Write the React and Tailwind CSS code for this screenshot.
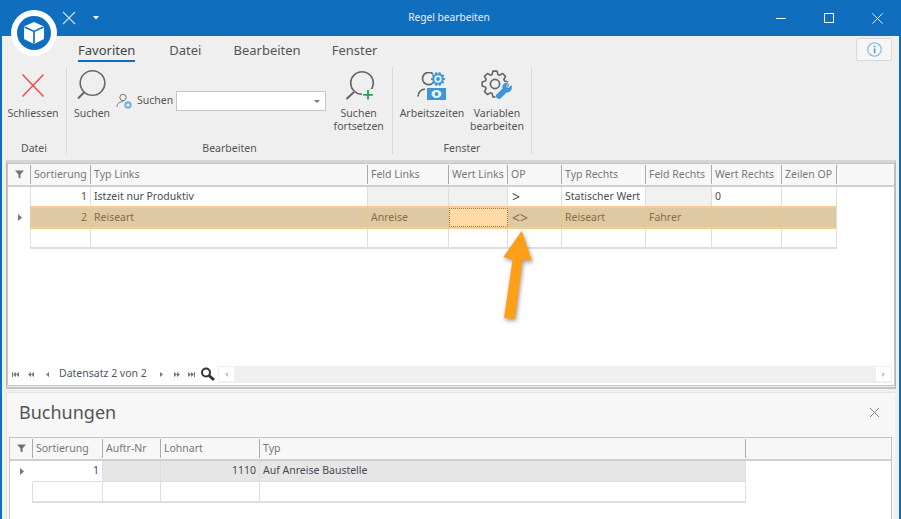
const FONT = "font-['Open_Sans','Noto_Sans',sans-serif]";

function Logo() {
  return (
    <div className="absolute left-[11px] top-[10px] w-[46px] h-[46px] rounded-full bg-white flex items-center justify-center">
      <svg width="34" height="34" viewBox="0 0 34 34">
        <circle cx="17" cy="17" r="17" fill="#106ebe" />
        <path d="M17 6 L27 10.5 V23 L17 28 L7 23 V10.5 Z" fill="#fff" />
        <path d="M7.5 11 L17 15.4 L26.5 11 M17 15.4 V27.5" fill="none" stroke="#106ebe" strokeWidth="1.7" />
      </svg>
    </div>
  );
}

function TitleBar() {
  return (
    <div className="h-[36px] grid grid-cols-[1fr_auto_1fr] items-center text-white shrink-0">
      <div className="flex items-center pl-[62px] gap-[17px]">
        <svg width="14" height="14" viewBox="0 0 14 14" stroke="#cfe3f5" strokeWidth="1.1" fill="none"><path d="M1 1 L13 13 M13 1 L1 13" /></svg>
        <svg width="6" height="4" viewBox="0 0 6 4" fill="#fff"><path d="M0 0 H6 L3 3.5 Z" /></svg>
      </div>
      <div className="text-[10.2px] text-[#e6f0f9] pr-[3px]">Regel bearbeiten</div>
      <div className="flex justify-end items-center pr-[18px] gap-[38px]">
        <svg width="10" height="10" viewBox="0 0 10 10" stroke="#fff" strokeWidth="1" fill="none"><path d="M0 5.5 H10" /></svg>
        <svg width="10" height="10" viewBox="0 0 10 10" stroke="#fff" strokeWidth="1" fill="none"><rect x=".5" y=".5" width="9" height="9" /></svg>
        <svg width="11" height="11" viewBox="0 0 11 11" stroke="#fff" strokeWidth="1" fill="none"><path d="M.5 .5 L10.5 10.5 M10.5 .5 L.5 10.5" /></svg>
      </div>
    </div>
  );
}

function Tabs() {
  return (
    <div className="h-[31px] flex items-start pl-[76px] pr-[7px] gap-[32px] text-[13px] text-[#555] shrink-0">
      <div className="relative pt-[3px] text-[#444] leading-[22px]">
        Favoriten
        <div className="h-[2px] bg-[#106ebe] -mt-[1px]" />
      </div>
      <div className="pt-[3px] ml-[2px] leading-[22px]">Datei</div>
      <div className="pt-[3px] leading-[22px]">Bearbeiten</div>
      <div className="pt-[3px] -ml-[1px] leading-[22px]">Fenster</div>
      <div className="ml-auto mt-[2px] w-[36px] h-[23px] bg-[#f6f6f6] border border-[#d8d8d8] rounded-[2px] flex items-center justify-center">
        <svg width="15" height="15" viewBox="0 0 15 15" fill="none"><circle cx="7.5" cy="7.5" r="6.7" stroke="#7fb8e6" strokeWidth="1.1" /><rect x="6.8" y="6.5" width="1.6" height="4.8" fill="#4a9ad8" /><rect x="6.8" y="3.7" width="1.6" height="1.6" fill="#4a9ad8" /></svg>
      </div>
    </div>
  );
}

function Magnifier() {
  return (
    <svg width="32" height="33" viewBox="0 0 32 33" fill="none" stroke="#666" strokeWidth="1.6">
      <circle cx="16.5" cy="16" r="12.3" />
      <path d="M8.5 25 L2 31.5" strokeWidth="2" />
    </svg>
  );
}

function MagnifierPlus() {
  return (
    <svg width="32" height="33" viewBox="0 0 32 33" fill="none" stroke="#666" strokeWidth="1.6">
      <circle cx="19" cy="16" r="11.3" />
      <path d="M11 25 L3.5 32" strokeWidth="2" />
      <rect x="19" y="22" width="13" height="11" fill="#efefef" stroke="none" />
      <path d="M25 23 V32.5 M20.2 27.8 H29.8" stroke="#27a34b" strokeWidth="1.8" />
    </svg>
  );
}

function BigButton({ icon, lines, w }) {
  return (
    <div className={`flex flex-col items-center ${w}`}>
      <div className="h-[33px] flex items-end justify-center">{icon}</div>
      <div className="mt-[7px] leading-[13px] text-center whitespace-nowrap">
        {lines.map((l) => <div key={l}>{l}</div>)}
      </div>
    </div>
  );
}

function Sep() {
  return <div className="w-px bg-[#d9d9d9] shrink-0" />;
}

function PersonClock() {
  return (
    <svg width="16" height="17" viewBox="0 0 16 17" fill="none">
      <circle cx="7" cy="4.5" r="3.2" stroke="#777" strokeWidth="1" />
      <path d="M1 14 C1 10 4 8.7 7 8.7" stroke="#777" strokeWidth="1" />
      <circle cx="12" cy="12" r="3.7" fill="#6fb2e4" />
      <circle cx="12" cy="12" r="1.6" fill="#efefef" />
    </svg>
  );
}

function gearPath(cx, cy, ro, ri, teeth) {
  const pts = [];
  const step = (Math.PI * 2) / teeth;
  for (let i = 0; i < teeth; i++) {
    const a = i * step;
    const list = [[ri, a - step * 0.38], [ro, a - step * 0.2], [ro, a + step * 0.2], [ri, a + step * 0.38]];
    list.forEach(([r, t]) => pts.push(`${(cx + r * Math.cos(t)).toFixed(2)} ${(cy + r * Math.sin(t)).toFixed(2)}`));
  }
  return `M${pts.join(" L")} Z`;
}

function Arbeitszeiten() {
  return (
    <svg width="30" height="28" viewBox="0 0 30 28" fill="none">
      <path d="M16 2 A6.2 6.2 0 1 0 16 11" stroke="#666" strokeWidth="1.7" />
      <path d="M1 24.5 C1.5 20 4 17.5 8 17" stroke="#666" strokeWidth="1.7" />
      <path d={gearPath(21, 7, 7, 5.6, 10)} fill="#3b97d9" />
      <circle cx="21" cy="7" r="3.7" fill="#efefef" />
      <circle cx="21" cy="7" r="1.9" fill="#3b97d9" />
      <rect x="10" y="16" width="19" height="12" fill="#3b97d9" />
      <ellipse cx="19.5" cy="22" rx="5" ry="4" fill="#efefef" />
      <circle cx="19.5" cy="22" r="1.9" fill="#3b97d9" />
    </svg>
  );
}

function Variablen() {
  return (
    <svg width="32" height="32" viewBox="0 0 32 32" fill="none">
      <path d={gearPath(14, 16, 13, 10, 8)} stroke="#666" strokeWidth="1.6" strokeLinejoin="round" />
      <circle cx="14" cy="16" r="4.6" stroke="#666" strokeWidth="1.7" />
      <path d="M30.5 17 L27.5 20 L25 18.5 L27.5 14.5 C24 14 20.5 16.5 21.5 20.5 L15 27 C14 29 17.5 32 19.5 30.5 L25.5 24.5 C29.5 25 32 21 30.5 17 Z" fill="#3b97d9" stroke="#efefef" strokeWidth="1.4" paintOrder="stroke" />
    </svg>
  );
}

function Group({ label, w, children }) {
  return (
    <div className={`flex flex-col items-stretch shrink-0 ${w}`}>
      <div className="flex-1 flex items-start">{children}</div>
      <div className="h-[12px] leading-[12px] text-center">{label}</div>
    </div>
  );
}

function Ribbon() {
  return (
    <div className="h-[87px] flex items-stretch text-[10.5px] text-[#555] shrink-0 pr-[2px]">
      <Group label="Datei" w="w-[64px]">
        <BigButton w="w-[62px]" lines={["Schliessen"]} icon={
          <svg width="22" height="23" viewBox="0 0 22 23" stroke="#ee4b4b" strokeWidth="1.5" fill="none" className="mb-[3px]"><path d="M.5 .5 L21.5 22.5 M21.5 .5 L.5 22.5" /></svg>
        } />
      </Group>
      <Sep />
      <Group label="Bearbeiten" w="w-[325px]">
        <div className="flex items-start">
          <BigButton w="w-[50px]" lines={["Suchen"]} icon={<Magnifier />} />
          <div className="flex items-center mt-[24px] ml-[-1px]">
            <PersonClock />
            <span className="ml-[5px]">Suchen</span>
            <div className="ml-[3px] w-[150px] h-[20px] bg-white border border-[#c6c6c6] flex items-center justify-end pr-[5px]">
              <svg width="6" height="3" viewBox="0 0 6 3" fill="#777"><path d="M0 0 H6 L3 3 Z" /></svg>
            </div>
          </div>
          <BigButton w="w-[65px]" lines={["Suchen", "fortsetzen"]} icon={<MagnifierPlus />} />
        </div>
      </Group>
      <Sep />
      <Group label="Fenster" w="w-[138px]">
        <div className="flex pl-[5px]">
          <BigButton w="w-[68px]" lines={["Arbeitszeiten"]} icon={<Arbeitszeiten />} />
          <BigButton w="w-[62px]" lines={["Variablen", "bearbeiten"]} icon={<Variablen />} />
        </div>
      </Group>
      <Sep />
    </div>
  );
}

const TOP = "grid grid-cols-[23px_60px_277px_81px_59px_54px_84px_66px_70px_55px_1fr]";
const BOT = "grid grid-cols-[23px_70px_58px_99px_486px_1fr]";

function FilterIcon() {
  return <svg width="9" height="9" viewBox="0 0 9 9" fill="#707070"><path d="M0 .5 H9 L5.5 4.5 V8.5 L3.5 7.5 V4.5 Z" /></svg>;
}
function Tri() {
  return <svg width="4" height="7" viewBox="0 0 4 7" fill="#777"><path d="M0 0 L4 3.5 L0 7 Z" /></svg>;
}

function Header({ labels, tpl }) {
  return (
    <div className={`${tpl} h-[23px] bg-[#f7f7f7] border-b-2 border-[#cfcfcf] text-[10.5px] text-[#777] shrink-0`}>
      <div className="flex items-center justify-center border-r border-[#aaa] my-[1px]"><FilterIcon /></div>
      {labels.map((l, i) => (
        <div key={i} className={`flex items-center pl-[3px] my-[1px] overflow-hidden whitespace-nowrap ${i < labels.length - 1 ? "border-r border-[#aaa]" : ""}`}>{l}</div>
      ))}
    </div>
  );
}

function Cell({ children, right, bg = "", border = "border-[#dedede]", extra = "" }) {
  return (
    <div className={`flex items-center px-[3px] border-r overflow-hidden whitespace-nowrap ${border} ${right ? "justify-end" : ""} ${bg} ${extra}`}>{children}</div>
  );
}

function TopGrid() {
  const sel = "border-[#e9c58e]";
  const sb = "bg-[#dfc9a3] border-y-2 border-y-[#f5cd93]";
  return (
    <div className="h-[223px] border border-[#c4c4c4] bg-white flex flex-col overflow-hidden">
      <Header tpl={TOP} labels={["Sortierung", "Typ Links", "Feld Links", "Wert Links", "OP", "Typ Rechts", "Feld Rechts", "Wert Rechts", "Zeilen OP", ""]} />
      <div className="text-[10.5px] text-[#4a4a55]">
        <div className={`${TOP} h-[19px]`}>
          <div className="border-r border-[#dedede]" />
          <Cell right>1</Cell>
          <Cell>Istzeit nur Produktiv</Cell>
          <Cell bg="bg-[#f1f1f1]" />
          <Cell bg="bg-[#f1f1f1]" />
          <Cell extra="text-[14px] pl-[4px]">&gt;</Cell>
          <Cell>Statischer Wert</Cell>
          <Cell bg="bg-[#f1f1f1]" />
          <Cell>0</Cell>
          <Cell />
          <div />
        </div>
        <div className={`${TOP} h-[23px] text-[#8a6c3f]`}>
          <div className="flex items-center justify-center"><Tri /></div>
          <Cell right bg={sb} border={sel} extra="-ml-px">2</Cell>
          <Cell bg={sb} border={sel}>Reiseart</Cell>
          <Cell bg={sb} border={sel}>Anreise</Cell>
          <div className="border-y-2 border-[#f5cd93]"><div className="h-full bg-[#ffd9a6] border border-dotted border-[#9c7a48]" /></div>
          <Cell bg={sb} border={sel} extra="text-[14px] pl-[4px]">&lt;&gt;</Cell>
          <Cell bg={sb} border={sel}>Reiseart</Cell>
          <Cell bg={sb} border={sel}>Fahrer</Cell>
          <Cell bg={sb} border={sel} />
          <Cell bg={sb} border="border-[#cfe3f5]" />
          <div />
        </div>
        <div className={`${TOP} h-[20px]`}>
          <div className="border-r border-[#dedede]" />
          {Array.from({ length: 9 }).map((_, i) => <div key={i} className="border-r border-b-2 border-[#dedede]" />)}
          <div />
        </div>
      </div>
      <div className="flex-1" />
      <div className="h-[25px] flex items-center text-[10.5px] text-[#555] shrink-0 pt-[3px] pr-[2px]">
        <NavIcons />
      </div>
    </div>
  );
}

function NavIcons() {
  const c = "#777";
  const first = <svg width="7" height="5" viewBox="0 0 7 5" fill={c}><rect width="1" height="5" /><path d="M4 0 V5 L1 2.5 Z M7 0 V5 L4 2.5 Z" /></svg>;
  const prev2 = <svg width="6" height="5" viewBox="0 0 6 5" fill={c}><path d="M3 0 V5 L0 2.5 Z M6 0 V5 L3 2.5 Z" /></svg>;
  const prev = <svg width="3" height="5" viewBox="0 0 3 5" fill={c}><path d="M3 0 V5 L0 2.5 Z" /></svg>;
  const next = <svg width="3" height="5" viewBox="0 0 3 5" fill={c}><path d="M0 0 V5 L3 2.5 Z" /></svg>;
  const next2 = <svg width="6" height="5" viewBox="0 0 6 5" fill={c}><path d="M0 0 V5 L3 2.5 Z M3 0 V5 L6 2.5 Z" /></svg>;
  const last = <svg width="7" height="5" viewBox="0 0 7 5" fill={c}><path d="M0 0 V5 L3 2.5 Z M3 0 V5 L6 2.5 Z" /><rect x="6" width="1" height="5" /></svg>;
  return (
    <>
      <div className="flex items-center -ml-[1px]">
        <div className="w-[16px] flex justify-center">{first}</div>
        <div className="w-[16px] flex justify-center">{prev2}</div>
        <div className="w-[16px] flex justify-center">{prev}</div>
      </div>
      <span className="ml-[4px] w-[95px] text-[#4d5766] whitespace-nowrap">Datensatz 2 von 2</span>
      <div className="flex items-center">
        <div className="w-[15px] flex justify-center">{next}</div>
        <div className="w-[15px] flex justify-center">{next2}</div>
        <div className="w-[15px] flex justify-center">{last}</div>
      </div>
      <svg width="16" height="15" viewBox="0 0 16 15" fill="none" className="ml-[1px]">
        <circle cx="6" cy="5.5" r="4" stroke="#333" strokeWidth="2" />
        <path d="M9 8.5 L14 13" stroke="#333" strokeWidth="3" />
      </svg>
      <div className="ml-[2px] flex-1 h-[17px] bg-[#efefef] flex justify-between items-center px-[1px]">
        <div className="w-[15px] h-[14px] bg-white flex items-center justify-center"><svg width="3" height="5" viewBox="0 0 3 5" fill="#c4c4c4"><path d="M3 0 V5 L0 2.5 Z" /></svg></div>
        <div className="w-[15px] h-[14px] bg-white flex items-center justify-center"><svg width="3" height="5" viewBox="0 0 3 5" fill="#c4c4c4"><path d="M0 0 V5 L3 2.5 Z" /></svg></div>
      </div>
    </>
  );
}

function BottomPanel() {
  return (
    <div className="flex-1 mt-[3px] mx-[4px] bg-[#f7f7f7] border-t border-l border-[#e4e4e4] flex flex-col">
      <div className="h-[43px] flex items-center justify-between pl-[12px] pr-[16px] pb-[5px] shrink-0">
        <span className="text-[18px] text-[#555] leading-none">Buchungen</span>
        <svg width="9" height="9" viewBox="0 0 9 9" stroke="#888" strokeWidth="1" fill="none"><path d="M0 0 L9 9 M9 0 L0 9" /></svg>
      </div>
      <div className="flex-1 mt-[1px] ml-[2px] mr-[3px] border border-b-0 border-[#c4c4c4] bg-white flex flex-col overflow-hidden">
        <Header tpl={BOT} labels={["Sortierung", "Auftr-Nr", "Lohnart", "Typ", ""]} />
        <div className="text-[10.5px] text-[#4a4a55]">
          <div className={`${BOT} h-[21px]`}>
            <div className="flex items-center justify-center"><Tri /></div>
            <Cell right extra="border-b border-b-[#dedede]">1</Cell>
            <Cell bg="bg-[#e6e6e6]" extra="border-b border-b-[#dedede]" />
            <Cell right bg="bg-[#e6e6e6]" extra="border-b border-b-[#dedede]">1110</Cell>
            <Cell bg="bg-[#e6e6e6]" extra="border-b border-b-[#dedede]">Auf Anreise Baustelle</Cell>
            <div />
          </div>
          <div className={`${BOT} h-[21px]`}>
            <div className="border-r border-[#dedede]" />
            <div className="border-r border-b-2 border-[#dedede]" />
            <div className="border-r border-b-2 border-[#dedede]" />
            <div className="border-r border-b-2 border-[#dedede]" />
            <div className="border-r border-b-2 border-[#dedede]" />
            <div />
          </div>
        </div>
      </div>
    </div>
  );
}

function Arrow() {
  return (
    <svg width="50" height="110" viewBox="0 0 50 110" className="absolute left-[495px] top-[222px] pointer-events-none drop-shadow-[1px_2px_2px_rgba(0,0,0,0.4)]">
      <polygon points="26.7,8.7 37,38.7 27.7,37.5 20,97 9,96 17.7,37 8.3,35.3" fill="#ff9e17" />
    </svg>
  );
}

export default function App() {
  return (
    <div className={`${FONT} relative w-[901px] h-[519px] overflow-hidden bg-[#106ebe] flex flex-col`}>
      <TitleBar />
      <div className="flex-1 mx-[2px] bg-[#efefef] flex flex-col min-h-0 overflow-hidden">
        <Tabs />
        <Ribbon />
        <div className="mt-[6px] ml-[4px] mr-[3px] border-t-[3px] border-[#d6d6d6] border-b-2 border-x border-x-[#b9b9b9] border-b-[#c4c4c4] pb-[1px]">
          <TopGrid />
        </div>
        <BottomPanel />
      </div>
      <Logo />
      <Arrow />
    </div>
  );
}
